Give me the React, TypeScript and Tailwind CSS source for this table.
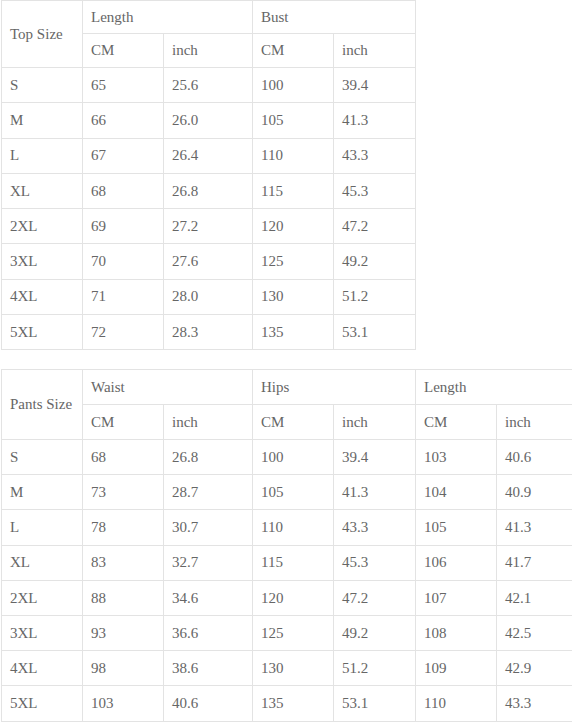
import React from "react";

const top = [
  ["S", "65", "25.6", "100", "39.4"],
  ["M", "66", "26.0", "105", "41.3"],
  ["L", "67", "26.4", "110", "43.3"],
  ["XL", "68", "26.8", "115", "45.3"],
  ["2XL", "69", "27.2", "120", "47.2"],
  ["3XL", "70", "27.6", "125", "49.2"],
  ["4XL", "71", "28.0", "130", "51.2"],
  ["5XL", "72", "28.3", "135", "53.1"],
];

const pants = [
  ["S", "68", "26.8", "100", "39.4", "103", "40.6"],
  ["M", "73", "28.7", "105", "41.3", "104", "40.9"],
  ["L", "78", "30.7", "110", "43.3", "105", "41.3"],
  ["XL", "83", "32.7", "115", "45.3", "106", "41.7"],
  ["2XL", "88", "34.6", "120", "47.2", "107", "42.1"],
  ["3XL", "93", "36.6", "125", "49.2", "108", "42.5"],
  ["4XL", "98", "38.6", "130", "51.2", "109", "42.9"],
  ["5XL", "103", "40.6", "135", "53.1", "110", "43.3"],
];

const cell =
  "border border-[#e3e3e3] pl-[8px] pr-[4px] text-left font-normal align-middle whitespace-nowrap text-[15px] text-[#666] font-[family-name:Liberation_Serif,serif]";

export default function App() {
  return (
    <div className="w-[572px] h-[723px] overflow-hidden bg-white pl-px font-[family-name:Liberation_Serif,serif]">
      <table className="table-fixed border-collapse w-[414px] font-[family-name:Liberation_Serif,serif]">
        <colgroup>
          <col className="w-[81px]" />
          <col className="w-[81px]" />
          <col className="w-[89px]" />
          <col className="w-[81px]" />
          <col className="w-[82px]" />
        </colgroup>
        <tbody>
          <tr className="h-[33px]">
            <td rowSpan={2} className={cell}>Top Size</td>
            <td colSpan={2} className={cell}>Length</td>
            <td colSpan={2} className={cell}>Bust</td>
          </tr>
          <tr className="h-[34px]">
            <td className={cell}>CM</td>
            <td className={cell}>inch</td>
            <td className={cell}>CM</td>
            <td className={cell}>inch</td>
          </tr>
          {top.map((r) => (
            <tr key={r[0]} className="h-[35.25px]">
              {r.map((c, i) => (
                <td key={i} className={cell}>{c}</td>
              ))}
            </tr>
          ))}
        </tbody>
      </table>
      <div className="h-[19px]" />
      <table className="table-fixed border-collapse w-[580px] font-[family-name:Liberation_Serif,serif]">
        <colgroup>
          <col className="w-[81px]" />
          <col className="w-[81px]" />
          <col className="w-[89px]" />
          <col className="w-[81px]" />
          <col className="w-[82px]" />
          <col className="w-[81px]" />
          <col className="w-[85px]" />
        </colgroup>
        <tbody>
          <tr className="h-[35px]">
            <td rowSpan={2} className={cell}>Pants Size</td>
            <td colSpan={2} className={cell}>Waist</td>
            <td colSpan={2} className={cell}>Hips</td>
            <td colSpan={2} className={cell}>Length</td>
          </tr>
          <tr className="h-[35px]">
            <td className={cell}>CM</td>
            <td className={cell}>inch</td>
            <td className={cell}>CM</td>
            <td className={cell}>inch</td>
            <td className={cell}>CM</td>
            <td className={cell}>inch</td>
          </tr>
          {pants.map((r) => (
            <tr key={r[0]} className="h-[35.2px]">
              {r.map((c, i) => (
                <td key={i} className={cell}>{c}</td>
              ))}
            </tr>
          ))}
        </tbody>
      </table>
    </div>
  );
}
